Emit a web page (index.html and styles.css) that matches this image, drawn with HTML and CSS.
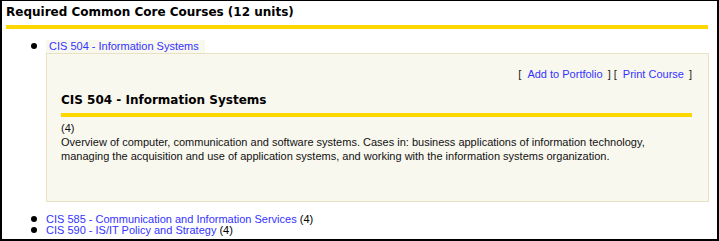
FILE: index.html
```html
<!DOCTYPE html>
<html lang="en">
<head>
  <meta charset="UTF-8" />
  <title>Required Common Core Courses</title>
  <link rel="stylesheet" href="styles.css">
</head>
<body>
  <div class="frame">
    <h2 class="section-title">Required Common Core Courses (12 units)</h2>
    <ul class="courses">
      <li class="open"><a class="tab" href="#">CIS 504 - Information Systems</a>
        <div class="course-box">
          <p class="actions">[<a href="#">Add to Portfolio</a>] [<a href="#">Print Course</a>]</p>
          <h3 class="course-title">CIS 504 - Information Systems</h3>
          <p class="desc">(4)<br>Overview of computer, communication and software systems. Cases in: business applications of information technology, managing the acquisition and use of application systems, and working with the information systems organization.</p>
        </div>
      </li>
    </ul>
    <ul class="courses closed">
      <li><a href="#">CIS 585 - Communication and Information Services</a> (4)</li>
      <li><a href="#">CIS 590 - IS/IT Policy and Strategy</a> (4)</li>
    </ul>
  </div>
</body>
</html>
```

FILE: styles.css
```css
body {
  margin: 0;
  padding: 0;
  background-color: #fff;
  color: #000;
  font-family: 'Liberation Sans', Arial, sans-serif;
  font-size: 11px;
}
.frame {
  height: 241px;
  box-sizing: border-box;
  border: 2px solid #000;
  border-top-width: 1px;
  overflow: hidden;
}
.section-title {
  font-family: 'DejaVu Sans', Verdana, sans-serif;
  font-size: 12px;
  line-height: 15px;
  font-weight: bold;
  margin: 4px 9px 0 4px;
  padding-bottom: 5px;
  border-bottom: 4px solid #ffd700;
}
a {
  color: #3333ff;
  text-decoration: none;
}
.courses {
  margin: 11px 8px 0 0;
  padding-left: 44px;
  list-style: none;
}
.courses li {
  line-height: 13px;
}
.courses li::before {
  content: "";
  display: inline-block;
  width: 6px;
  height: 6px;
  border-radius: 50%;
  background-color: #000;
  margin: 0 9px 0 -15px;
  vertical-align: 1px;
}
.tab {
  display: inline-block;
  background-color: #f9f8ef;
  padding: 0 6px 0 3px;
  line-height: 13px;
}
.course-box {
  background-color: #f9f8ef;
  border: 1px solid #e8e1c2;
  padding: 13px 16px 38px 14px;
}
.actions {
  margin: 0;
  text-align: right;
  line-height: 14px;
  color: #222;
}
.actions a {
  padding: 0 5px 0 6px;
}
.course-title {
  font-family: 'DejaVu Sans', Verdana, sans-serif;
  font-size: 12px;
  line-height: 15px;
  font-weight: bold;
  margin: 12px 0 0 0;
  padding-bottom: 5px;
  border-bottom: 4px solid #ffd700;
}
.desc {
  margin: 4px 0 0 0;
  line-height: 14px;
  color: #111;
}
.closed {
  margin-top: 12px;
}
.closed li {
  line-height: 11px;
}
```
